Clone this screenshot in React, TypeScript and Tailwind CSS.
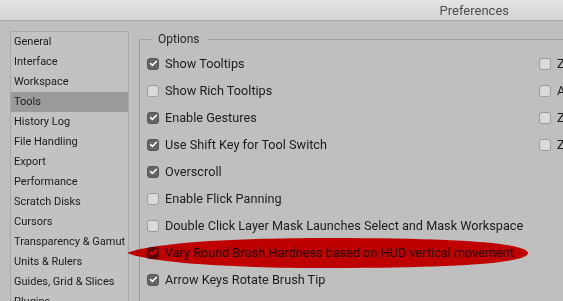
import { Check } from 'lucide-react';

const categories = [
  'General',
  'Interface',
  'Workspace',
  'Tools',
  'History Log',
  'File Handling',
  'Export',
  'Performance',
  'Scratch Disks',
  'Cursors',
  'Transparency & Gamut',
  'Units & Rulers',
  'Guides, Grid & Slices',
  'Plugins',
];

const options = [
  { label: 'Show Tooltips', checked: true },
  { label: 'Show Rich Tooltips', checked: false },
  { label: 'Enable Gestures', checked: true },
  { label: 'Use Shift Key for Tool Switch', checked: true },
  { label: 'Overscroll', checked: true },
  { label: 'Enable Flick Panning', checked: false },
  { label: 'Double Click Layer Mask Launches Select and Mask Workspace', checked: false },
  { label: 'Vary Round Brush Hardness based on HUD vertical movement', checked: true },
  { label: 'Arrow Keys Rotate Brush Tip', checked: true },
  { label: 'Use Legacy Free Transform', checked: false },
];

const rightOptions = ['Zoom with Scroll Wheel', 'Animated Zoom', 'Zoom Resizes Windows', 'Zoom Clicked Point to Center'];

function Box({ checked }: { checked: boolean }) {
  return checked ? (
    <span className="w-[12px] h-[12px] shrink-0 rounded-[3px] bg-[#646464] border border-[#565656] flex items-center justify-center">
      <Check size={9} strokeWidth={4} className="text-white" />
    </span>
  ) : (
    <span className="w-[12px] h-[12px] shrink-0 rounded-[3px] bg-[#dadada] border border-[#9c9c9c]" />
  );
}

export default function App() {
  return (
    <div
      className="relative w-[563px] h-[301px] overflow-hidden bg-[#bfbfbf] text-[#1c1c1c]"
      style={{ fontFamily: 'Roboto, "Liberation Sans", sans-serif' }}
    >
      {/* Title bar */}
      <div className="h-[21px] bg-gradient-to-b from-[#e4e4e4] to-[#d2d2d2] border-b border-[#a9a9a9] flex items-center justify-end pr-[54px] pt-[1px]">
        <span className="text-[13px] text-[#4d4d4d]">Preferences</span>
      </div>

      <div className="flex items-start pl-[10px] pt-[10px]">
        {/* Category list */}
        <ul className="w-[119px] shrink-0 border border-[#a8a8a8] bg-[#c2c2c2] h-[300px]">
          {categories.map((c) => (
            <li
              key={c}
              className={`h-[20px] flex items-center pl-[3px] text-[11px] whitespace-nowrap ${c === 'Tools' ? 'bg-[#9b9b9b]' : ''}`}
            >
              {c}
            </li>
          ))}
        </ul>

        {/* Options group */}
        <fieldset className="ml-[10px] mt-[1px] w-[600px] shrink-0 border-l border-t border-[#9f9f9f] pl-[7px]">
          <legend className="ml-[4px] px-[7px] text-[12px] leading-[14px] text-[#262626]">Options</legend>
          <div className="flex pt-[4px]">
            <div className="w-[392px] shrink-0">
              {options.map((o) => (
                <div key={o.label} className="h-[27px] flex items-center gap-[6px] text-[12.7px] whitespace-nowrap">
                  <Box checked={o.checked} />
                  <span>{o.label}</span>
                </div>
              ))}
            </div>
            <div>
              {rightOptions.map((o) => (
                <div key={o} className="h-[27px] flex items-center gap-[6px] text-[12.7px] whitespace-nowrap">
                  <Box checked={false} />
                  <span>{o}</span>
                </div>
              ))}
            </div>
          </div>
        </fieldset>
      </div>

      {/* Red annotation mark */}
      <svg className="absolute inset-0 pointer-events-none mix-blend-multiply" width="563" height="301" viewBox="0 0 563 301">
        <path
          d="M127 253 C 150 244, 220 238, 330 238 C 470 238, 528 244, 528 253 C 528 262, 470 268, 330 268 C 220 268, 150 262, 127 253 Z"
          fill="#ff0000"
        />
      </svg>
    </div>
  );
}
